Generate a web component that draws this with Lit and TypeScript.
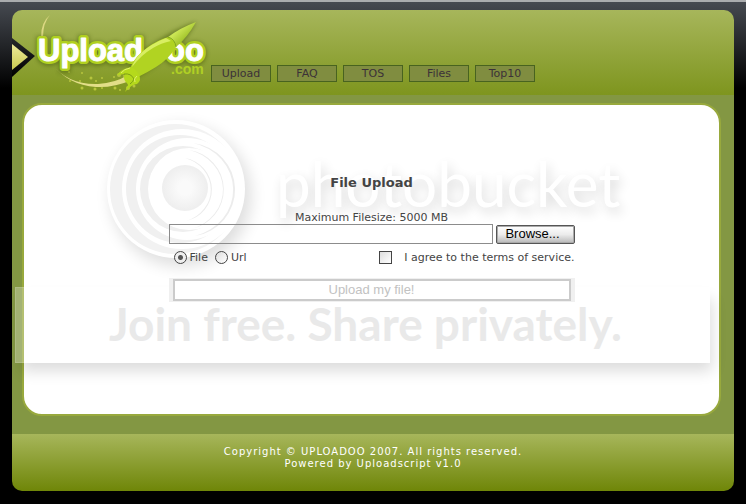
import { LitElement, html, css, svg } from "lit";
import { customElement, property } from "lit/decorators.js";

@customElement("uploadoo-logo")
class UploadooLogo extends LitElement {
  static styles = css`
    :host { display: block; width: 200px; height: 85px; flex: none; }
    svg { display: block; }
    .word { font: bold 31px "Liberation Sans", Arial, sans-serif; }
    .halo { fill: #b0d020; stroke: #b0d020; stroke-width: 6; stroke-linejoin: round; }
    .face { fill: #fff; stroke: #fff; stroke-width: 1; stroke-linejoin: round; }
    .com { font: bold 14px "Liberation Sans", Arial, sans-serif; fill: #b0d024; }
  `;
  render() {
    const dots = [[57, 62, 1], [70, 63, 1], [58, 71, 1], [68, 71, 1], [79, 68, 1.5], [84, 71, 1], [90, 68, 1], [90, 78, 1],
      [102, 67, 1], [107, 65, 2], [112, 66, 1], [70, 78, 1.5], [83, 79, 1.5], [103, 78, 1.5], [108, 80, 1], [116, 78, 2], [122, 76, 1.5]];
    return html`<svg width="200" height="85" viewBox="0 0 200 85" role="img" aria-label="Uploadoo.com">
      <defs>
        <linearGradient id="arrow" x1="0" y1="0" x2="0" y2="1"><stop offset="0" stop-color="#edea9a"/><stop offset="1" stop-color="#c8c850"/></linearGradient>
        <linearGradient id="edge" x1="0" y1="0" x2="0" y2="1"><stop offset="0" stop-color="#25282a"/><stop offset="1" stop-color="#000"/></linearGradient>
        <linearGradient id="nose" x1="0" y1="0" x2="1" y2="1"><stop offset="0.35" stop-color="#cbe655"/><stop offset="0.7" stop-color="#9abd22"/></linearGradient>
        <filter id="soft" x="-20%" y="-30%" width="140%" height="160%"><feGaussianBlur stdDeviation="2"/></filter>
      </defs>
      <path d="M0 28 L23 46 L0 67Z" fill="url(#edge)"/>
      <path d="M0 34 L16 47 L0 60Z" fill="url(#arrow)"/>
      <path d="M38 5 Q31 13 31 27 L29 27 Q29 12 38 5Z" fill="#dcd883"/>
      <path d="M40 54 Q56 75 86 74 Q103 73 116 65 L120 70 Q101 78 84 77 Q56 75 40 54Z" fill="#e2de88"/>
      ${dots.map(([x, y, r]) => svg`<circle cx=${x} cy=${y} r=${r} fill="#b7c53e"/>`)}
      <g filter="url(#soft)" opacity="0.55">
        <g class="word" fill="#3f5208" stroke="#3f5208" stroke-width="7"><text x="26" y="52" aria-hidden="true">Upload</text><text x="154" y="52" aria-hidden="true">oo</text></g>
        <path d="M184 12 Q163 19 144 32 Q123 45 117 60 L126 67 Q146 55 163 41 Q175 29 184 12Z" fill="#3f5208"/>
      </g>
      <g class="word halo"><text x="26" y="51">Upload</text><text x="154" y="51">oo</text></g>
      <g class="word face"><text x="26" y="51">Upload</text><text x="154" y="51">oo</text></g>
      <text class="com" x="159" y="64">.com</text>
      <path d="M184 12 Q168 18 156 27 L164 37 Q175 28 184 12Z" fill="url(#nose)"/>
      <path d="M156 27 Q162 29 164 37 Q157 49 144 57 Q136 62 126 67 Q123 61 118 58 Q123 46 136 37 Q146 30 156 27Z" fill="#b1d322"/>
      <path d="M154 28 Q138 34 128 44 Q122 50 120 57 Q129 45 141 38 Q149 33 159 31Z" fill="#d8ee62"/>
      <path d="M156 27 Q163 29 164 37" fill="none" stroke="#82a81c" stroke-width="1"/>
      <path d="M119 57 Q109 59 105 65 L113 64 Q111 67 113 71 Q116 74 116 75 L113 82 Q120 74 125 74 Q130 70 127 65 Q124 59 119 57Z" fill="#b5d91c"/>
      <path d="M112 64 Q119 63 122 69 Q121 72 118 74" fill="none" stroke="#7da016" stroke-width="1"/>
      <path d="M118 58 Q112 59 109 63 M125 66 Q121 69 123 72" fill="none" stroke="#e1f26c" stroke-width="1"/>
    </svg>`;
  }
}

@customElement("stock-watermark")
class StockWatermark extends LitElement {
  static styles = css`
    :host { position: absolute; inset: 0; pointer-events: none; overflow: hidden; }
    .rings { position: absolute; left: 83px; top: 15px; }
    .brand { position: absolute; left: 264px; top: 50px; font: 62px/76px Lato, sans-serif; color: #fff; text-shadow: 3px 5px 12px rgba(0,0,0,.16); white-space: nowrap; }
    .band { position: absolute; left: 3px; right: 24px; top: 192px; height: 76px; box-sizing: border-box; background: rgba(255,255,255,.27); border: 1px solid rgba(255,255,255,.12); box-shadow: 4px 10px 14px -2px rgba(0,0,0,.14); }
    .slogan { position: absolute; left: 97px; top: 202px; font: bold 46px/54px Lato, sans-serif; color: #e9e9e9; white-space: nowrap; }
  `;
  render() {
    return html`
      <svg class="rings" width="190" height="180" viewBox="0 0 190 180" aria-hidden="true">
        <defs>
          <filter id="blur" x="-25%" y="-25%" width="150%" height="150%"><feGaussianBlur stdDeviation="8"/></filter>
          <radialGradient id="hole"><stop offset="0.3" stop-color="#fafafa"/><stop offset="1" stop-color="#eee"/></radialGradient>
        </defs>
        <circle cx="86" cy="86" r="70" fill="#000" opacity=".13" filter="url(#blur)"/>
        <circle cx="81" cy="79" r="69" fill="#fff"/>
        <circle cx="80" cy="79" r="65" fill="#f2f2f2"/><circle cx="87" cy="79" r="60" fill="#fff"/>
        <circle cx="85" cy="79" r="54" fill="#f0f0f0"/><circle cx="92" cy="79" r="51" fill="#fff"/>
        <circle cx="88" cy="79" r="43" fill="#efefef"/><circle cx="94" cy="79" r="41" fill="#fff"/>
        <g fill="#ececec">
          <path d="M98 33 A48 47 0 0 1 100 126 A52 48 0 0 0 98 33Z"/>
          <path d="M94 40 A40 40 0 0 1 96 119 A45 41 0 0 0 94 40Z"/>
          <path d="M90 48 A32 32 0 0 1 91 111 A36 33 0 0 0 90 48Z"/>
        </g>
        <circle cx="90" cy="78" r="23" fill="url(#hole)"/>
      </svg>
      <div class="brand">photobucket</div>
      <div class="band"></div>
      <div class="slogan">Join free. Share privately.</div>`;
  }
}

@customElement("app-root")
class AppRoot extends LitElement {
  @property({ attribute: false }) links = ["Upload", "FAQ", "TOS", "Files", "Top10"];
  static styles = css`
    :host { display: block; min-height: 100vh; box-sizing: border-box; padding: 8px 12px 13px; border-top: 2px solid #aaacae;
      background: #000 linear-gradient(#464a51, #000 86px) no-repeat; font: 11px/13px "DejaVu Sans", Verdana, sans-serif; color: #444; }
    .frame { overflow: hidden; border-radius: 10px; }
    header { display: flex; align-items: flex-end; height: 85px; background: linear-gradient(#a7b65b, #7e951e); }
    nav { display: flex; gap: 6px; padding-bottom: 13px; margin-left: -1px; }
    nav a { box-sizing: border-box; width: 60px; height: 17px; border: 1px solid #48631f; background: #808d40; color: #3c3238; text-align: center; line-height: 16px; text-decoration: none; }
    main { position: relative; padding: 8px 13px 18px 10px; background: linear-gradient(45deg, #71983f 12%, #839743 12% 50%, #71983f 50% 62%, #839743 62%) 0 0 / 4px 4px; }
    .panel { box-sizing: border-box; min-height: 313px; padding-top: 69px; border: 2px solid #98a93d; border-radius: 20px; background: #fff; }
    form { position: relative; z-index: 1; width: 406px; margin: 0 auto; }
    h1 { margin: 0 0 19px; font-size: 13px; line-height: 18px; text-align: center; }
    .limit { margin: 0; text-align: center; }
    .row { display: flex; align-items: center; }
    .file { gap: 3px; }
    .path { flex: 1; min-width: 0; height: 20px; box-sizing: border-box; border: 1px solid #8c8c8c; background: transparent; padding: 0 3px; }
    .browse { width: 79px; height: 19px; box-sizing: border-box; padding: 0 5px 0 0; border: 1px solid #555; border-radius: 2px; background: linear-gradient(#fff, #ececec 50%, #b8b8b8); box-shadow: inset 0 0 0 1px #aaa; font: 13px/16px "Liberation Sans", Arial, sans-serif; color: #000; }
    .choices { gap: 7px; padding: 7px 0 14px 5px; }
    label { display: flex; align-items: center; gap: 3px; }
    .terms { margin-left: auto; gap: 12px; }
    input[type="radio"], input[type="checkbox"] { appearance: none; box-sizing: border-box; width: 13px; height: 13px; margin: 0; border: 1px solid #444; background: linear-gradient(135deg, #ddd, #fff); }
    input[type="radio"] { border-radius: 50%; }
    input[type="radio"]:checked { background: radial-gradient(#555 0 2px, #eee 3px); }
    .send { display: block; width: 100%; height: 24px; padding: 0; box-sizing: border-box; border: 1px solid #f0f0f0; border-width: 1px 4px; background: #fff; box-shadow: inset 0 0 0 2px #cbcbcb; color: #c2c2c2; font: 13px/20px "Liberation Sans", Arial, sans-serif; }
    footer { height: 57px; box-sizing: border-box; padding-top: 12px; background: linear-gradient(#a7b65b, #6f8608); color: #fff; text-align: center; font-size: 10px; line-height: 12px; letter-spacing: 1px; }
    footer p { margin: 0; }
  `;
  render() {
    return html`<div class="frame">
      <header><uploadoo-logo></uploadoo-logo><nav>${this.links.map((l) => html`<a href="#">${l}</a>`)}</nav></header>
      <main>
        <section class="panel">
          <form @submit=${(e: Event) => e.preventDefault()}>
            <h1>File Upload</h1>
            <p class="limit" id="limit">Maximum Filesize: 5000 MB</p>
            <div class="row file"><input class="path" type="text" aria-labelledby="limit"><button class="browse" type="button">Browse...</button></div>
            <div class="row choices">
              <label><input type="radio" name="source" checked>File</label>
              <label><input type="radio" name="source">Url</label>
              <label class="terms"><input type="checkbox">I agree to the terms of service.</label>
            </div>
            <button class="send" disabled>Upload my file!</button>
          </form>
        </section>
        <stock-watermark></stock-watermark>
      </main>
      <footer><p>Copyright © UPLOADOO 2007. All rights reserved.</p><p>Powered by Uploadscript v1.0</p></footer>
    </div>`;
  }
}
